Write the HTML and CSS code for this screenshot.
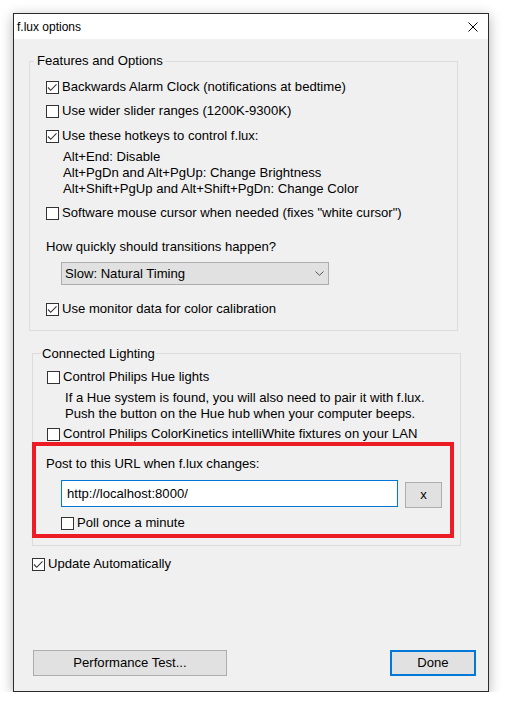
FILE: index.html
```html
<!DOCTYPE html>
<html lang="en">
<head>
    <meta charset="UTF-8">
    <title>f.lux options</title>
    <link rel="stylesheet" href="styles.css">
</head>
<body>
    <div class="window">
        <!-- Title bar -->
        <div class="titlebar">
            <span class="title">f.lux options</span>
            <svg class="close" width="10" height="10" viewBox="0 0 10 10">
                <path d="M0.5 0.5 L9.5 9.5 M9.5 0.5 L0.5 9.5" stroke="#000" stroke-width="1" fill="none"/>
            </svg>
        </div>

        <div class="body">
            <!-- Features group -->
            <div class="group group-features">
                <span class="legend">Features and Options</span>

                <div class="check checked r-alarm">
                    <span class="box"><svg width="11" height="11" viewBox="0 0 11 11"><polyline points="1,5.5 3.7,8.3 9.5,2.3" fill="none" stroke="#333" stroke-width="1.1"/></svg></span>
                    <span>Backwards Alarm Clock (notifications at bedtime)</span>
                </div>
                <div class="check r-wider">
                    <span class="box"></span>
                    <span>Use wider slider ranges (1200K-9300K)</span>
                </div>
                <div class="check checked r-hotkeys">
                    <span class="box"><svg width="11" height="11" viewBox="0 0 11 11"><polyline points="1,5.5 3.7,8.3 9.5,2.3" fill="none" stroke="#333" stroke-width="1.1"/></svg></span>
                    <span>Use these hotkeys to control f.lux:</span>
                </div>
                <div class="hotkeys">
                    <div>Alt+End: Disable</div>
                    <div>Alt+PgDn and Alt+PgUp: Change Brightness</div>
                    <div>Alt+Shift+PgUp and Alt+Shift+PgDn: Change Color</div>
                </div>
                <div class="check r-cursor">
                    <span class="box"></span>
                    <span>Software mouse cursor when needed (fixes "white cursor")</span>
                </div>

                <div class="label r-speed">How quickly should transitions happen?</div>
                <div class="select">
                    <span>Slow: Natural Timing</span>
                    <svg width="9" height="5" viewBox="0 0 9 5"><polyline points="0.5,0.5 4.5,4.3 8.5,0.5" fill="none" stroke="#555" stroke-width="1"/></svg>
                </div>

                <div class="check checked r-monitor">
                    <span class="box"><svg width="11" height="11" viewBox="0 0 11 11"><polyline points="1,5.5 3.7,8.3 9.5,2.3" fill="none" stroke="#333" stroke-width="1.1"/></svg></span>
                    <span>Use monitor data for color calibration</span>
                </div>
            </div>

            <!-- Connected lighting group -->
            <div class="group group-lighting">
                <span class="legend">Connected Lighting</span>

                <div class="check r-hue">
                    <span class="box"></span>
                    <span>Control Philips Hue lights</span>
                </div>
                <div class="note">
                    <div>If a Hue system is found, you will also need to pair it with f.lux.</div>
                    <div>Push the button on the Hue hub when your computer beeps.</div>
                </div>
                <div class="check r-kinetics">
                    <span class="box"></span>
                    <span>Control Philips ColorKinetics intelliWhite fixtures on your LAN</span>
                </div>

                <div class="highlight">
                    <div class="label">Post to this URL when f.lux changes:</div>
                    <div class="url-row">
                        <div class="url-input">http://localhost:8000/</div>
                        <div class="btn btn-clear">x</div>
                    </div>
                    <div class="check r-poll">
                        <span class="box"></span>
                        <span>Poll once a minute</span>
                    </div>
                </div>
            </div>

            <div class="check checked r-update">
                <span class="box"><svg width="11" height="11" viewBox="0 0 11 11"><polyline points="1,5.5 3.7,8.3 9.5,2.3" fill="none" stroke="#333" stroke-width="1.1"/></svg></span>
                <span>Update Automatically</span>
            </div>

            <!-- Bottom buttons -->
            <div class="buttons">
                <div class="btn btn-perf">Performance Test...</div>
                <div class="btn btn-done">Done</div>
            </div>
        </div>
    </div>
</body>
</html>
```

FILE: styles.css
```css
/* Dialog look */
body {
    margin: 0;
    background-color: #fff;
    font-family: 'Liberation Sans', Arial, sans-serif;
    font-size: 13.1px;
    line-height: 16px;
    color: #000;
}

.window {
    box-sizing: border-box;
    width: 476px;
    height: 679px;
    margin: 13px 0 0 13px;
    border: 1px solid #2b2b2b;
    background-color: #f0f0f0;
    box-shadow: 0 3px 12px rgba(0, 0, 0, 0.3);
    display: flex;
    flex-direction: column;
}

.titlebar {
    height: 25px;
    background-color: #fff;
    display: flex;
    align-items: center;
    justify-content: space-between;
    padding: 0 10px 0 3px;
}

.title {
    font-size: 12px;
}

.close {
    display: block;
}

.body {
    flex: 1;
    display: flex;
    flex-direction: column;
}

/* Group boxes */
.group {
    position: relative;
    box-sizing: border-box;
    width: 429px;
    border: 1px solid #dcdcdc;
    margin-top: 22px;
}

.legend {
    position: absolute;
    background-color: #f0f0f0;
}

.group-features {
    margin-left: 15px;
    padding: 17px 0 13px 16px;
}

.group-features .legend {
    top: -9px;
    left: 4px;
    padding: 0 2px 0 3px;
}

.group-lighting {
    margin-left: 18px;
    padding: 15px 0 7px 14px;
}

.group-lighting .legend {
    top: -8px;
    left: 8px;
    padding: 0 1px;
}

/* Checkboxes */
.check {
    display: flex;
    align-items: center;
    height: 16px;
    white-space: nowrap;
}

.box {
    box-sizing: border-box;
    width: 13px;
    height: 13px;
    border: 1px solid #333;
    background-color: #fff;
    margin-right: 3px;
    flex-shrink: 0;
}

.box svg {
    display: block;
}

.label {
    white-space: nowrap;
}

.r-wider { margin-top: 8px; }
.r-hotkeys { margin-top: 9px; }
.r-cursor { margin-top: 8px; }
.r-speed { margin-top: 18px; }
.r-monitor { margin-top: 16px; }

.hotkeys {
    margin-top: 5px;
    padding-left: 17px;
}

.select {
    box-sizing: border-box;
    width: 268px;
    height: 23px;
    margin: 7px 0 0 15px;
    padding: 0 4px 0 3px;
    background-color: #e1e1e1;
    border: 1px solid #adadad;
    display: flex;
    align-items: center;
    justify-content: space-between;
}

.select svg {
    display: block;
}

/* Lighting */
.note {
    margin-top: 5px;
    padding-left: 18px;
}

.r-kinetics { margin-top: 4px; }

.highlight {
    box-sizing: border-box;
    width: 422px;
    margin-left: -15px;
    border: 4px solid #ed1c24;
    padding: 10px 0 3px 10px;
}

.url-row {
    display: flex;
    align-items: flex-start;
    margin: 8px 0 0 15px;
}

.url-input {
    box-sizing: border-box;
    width: 337px;
    height: 27px;
    border: 1px solid #0078d7;
    background-color: #fff;
    padding-left: 5px;
    display: flex;
    align-items: center;
}

.btn {
    box-sizing: border-box;
    background-color: #e1e1e1;
    border: 1px solid #adadad;
    display: flex;
    align-items: center;
    justify-content: center;
}

.btn-clear {
    width: 37px;
    height: 26px;
    margin: 2px 0 0 7px;
}

.r-poll {
    margin: 7px 0 0 15px;
}

.r-update {
    margin: 10px 0 0 18px;
}

/* Bottom buttons */
.buttons {
    display: flex;
    justify-content: space-between;
    margin: 78px 12px 0 19px;
}

.btn-perf {
    width: 194px;
    height: 26px;
}

.btn-done {
    width: 86px;
    height: 26px;
    border: 2px solid #0078d7;
}
```
